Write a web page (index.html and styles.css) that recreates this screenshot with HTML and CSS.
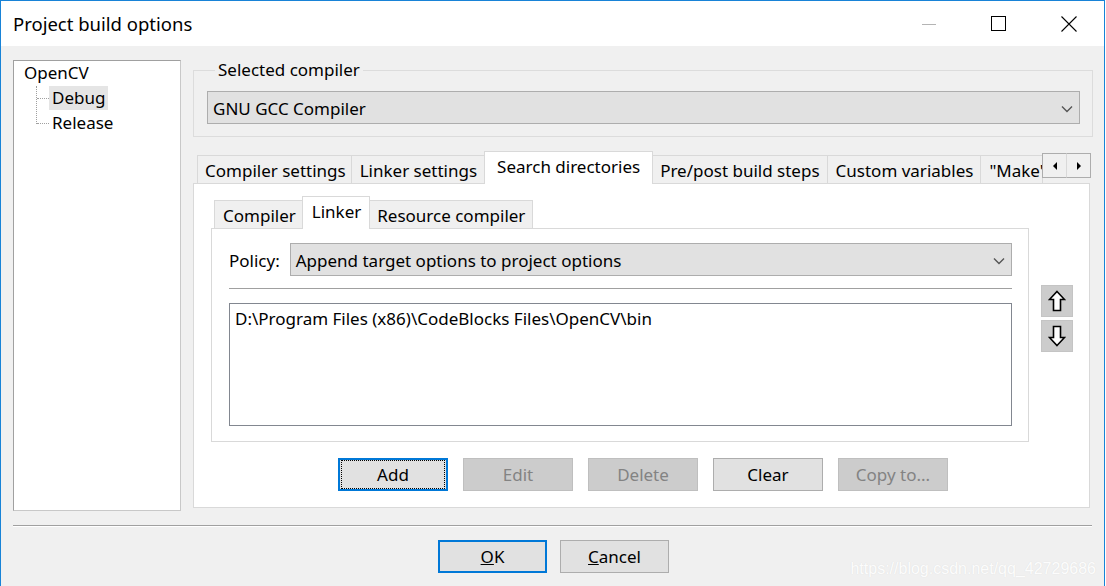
FILE: index.html
```html
<!DOCTYPE html>
<html lang="en">

<head>
	<meta charset="utf-8">
	<title>Project build options</title>
	<link rel="stylesheet" href="styles.css">
</head>

<body>
	<div class="window">
		<div class="titlebar">
			<div class="title">Project build options</div>
			<div class="caption-btns">
				<span class="cap"><svg width="14" height="14" viewBox="0 0 14 14"><path d="M0 7.5h14" stroke="#b4b4b4" stroke-width="1"/></svg></span>
				<span class="cap"><svg width="16" height="16" viewBox="0 0 16 16"><rect x="0.5" y="0.5" width="14" height="14" fill="none" stroke="#000"/></svg></span>
				<span class="cap"><svg width="16" height="16" viewBox="0 0 16 16"><path d="M0.5 0.5L15.5 15.5M15.5 0.5L0.5 15.5" stroke="#000" stroke-width="1.1"/></svg></span>
			</div>
		</div>

		<div class="content">
			<div class="tree">
				<div class="node root">OpenCV</div>
				<div class="branch">
					<div class="node child"><span class="sel">Debug</span></div>
					<div class="node child last"><span>Release</span></div>
				</div>
			</div>

			<div class="main">
				<fieldset class="group">
					<legend>Selected compiler</legend>
					<div class="combo wide">
						<span>GNU GCC Compiler</span>
						<svg class="chev" width="12" height="8" viewBox="0 0 12 8"><path d="M1 1.5l5 5 5-5" fill="none" stroke="#555" stroke-width="1.4"/></svg>
					</div>
				</fieldset>

				<div class="tabs top">
					<div class="tab">Compiler settings</div>
					<div class="tab">Linker settings</div>
					<div class="tab active">Search directories</div>
					<div class="tab">Pre/post build steps</div>
					<div class="tab">Custom variables</div>
					<div class="tab clip"><span>"Make" commands</span></div>
					<div class="scroller">
						<span><svg width="6" height="8" viewBox="0 0 6 8"><path d="M5 0v8L1 4z" fill="#000"/></svg></span>
						<span><svg width="6" height="8" viewBox="0 0 6 8"><path d="M1 0v8l4-4z" fill="#000"/></svg></span>
					</div>
				</div>

				<div class="panel">
					<div class="tabs inner">
						<div class="tab">Compiler</div>
						<div class="tab active">Linker</div>
						<div class="tab">Resource compiler</div>
					</div>

					<div class="inner-row">
						<div class="subpanel">
							<div class="policy">
								<label>Policy:</label>
								<div class="combo">
									<span>Append target options to project options</span>
									<svg class="chev" width="12" height="8" viewBox="0 0 12 8"><path d="M1 1.5l5 5 5-5" fill="none" stroke="#555" stroke-width="1.4"/></svg>
								</div>
							</div>
							<div class="rule"></div>
							<div class="listbox">D:\Program Files (x86)\CodeBlocks Files\OpenCV\bin</div>
						</div>

						<div class="movers">
							<span class="mover"><svg width="18" height="22" viewBox="0 0 18 22"><path d="M9 1.5L16.5 9.5H12.5V20.5H5.5V9.5H1.5Z" fill="#fff" stroke="#000" stroke-width="1.6"/></svg></span>
							<span class="mover"><svg width="18" height="22" viewBox="0 0 18 22"><path d="M9 20.5L16.5 12.5H12.5V1.5H5.5V12.5H1.5Z" fill="#fff" stroke="#000" stroke-width="1.6"/></svg></span>
						</div>
					</div>

					<div class="actions">
						<button class="btn focus"><span>Add</span></button>
						<button class="btn off">Edit</button>
						<button class="btn off">Delete</button>
						<button class="btn">Clear</button>
						<button class="btn off">Copy to...</button>
					</div>
				</div>
			</div>
		</div>

		<div class="footer-rule"></div>

		<div class="footer">
			<button class="btn default"><u>O</u>K</button>
			<button class="btn"><u>C</u>ancel</button>
		</div>

		<div class="watermark">https://blog.csdn.net/qq_42729686</div>
	</div>
</body>

</html>
```

FILE: styles.css
```css
* {
	box-sizing: border-box;
}

body {
	margin: 0;
	width: 1106px;
	height: 586px;
	overflow: hidden;
	background: #fff;
	font-family: 'Noto Sans', sans-serif;
	font-size: 17px;
	color: #000;
}

.window {
	position: relative;
	width: 1105px;
	height: 586px;
	border: 1px solid #1883d7;
	border-bottom: none;
	background: #f0f0f0;
	display: flex;
	flex-direction: column;
}

/* title bar */
.titlebar {
	height: 45px;
	background: #fff;
	display: flex;
	align-items: center;
	justify-content: space-between;
	flex: none;
}
.title {
	padding-left: 12px;
	font-size: 18.5px;
	margin-top: -1px;
}
.caption-btns {
	display: flex;
	height: 100%;
}
.cap {
	width: 70px;
	display: flex;
	align-items: center;
	justify-content: center;
}

/* body */
.content {
	display: flex;
	gap: 12px;
	padding: 14px 11px 0 12px;
	flex: none;
}

.tree {
	width: 169px;
	height: 451px;
	background: #fff;
	border: 1px solid #a0a0a0;
	border-right-color: #c8c8c8;
	border-bottom-color: #c8c8c8;
	padding: 0 0 0 10px;
	line-height: 24.5px;
}
.branch {
	margin-left: 12px;
	border-left: 1px dotted #a0a0a0;
	height: 38px;
	width: 100px;
}
.node.child {
	position: relative;
	padding-left: 15px;
	height: 25px;
}
.node.child::before {
	content: '';
	position: absolute;
	left: 0;
	top: 12px;
	width: 12px;
	border-top: 1px dotted #a0a0a0;
}
.node.child .sel {
	background: #e5e5e5;
	padding: 0 3px;
	margin-left: -3px;
	display: inline-block;
}

.main {
	flex: 1;
	display: flex;
	flex-direction: column;
}

.group {
	margin: 0;
	padding: 0 12px 0 13px;
	border: 1px solid #dcdcdc;
	height: 77px;
	width: 900px;
}
.group legend {
	padding: 0 3px;
	margin-left: 8px;
	line-height: 20px;
}

.combo {
	height: 33px;
	background: #e1e1e1;
	border: 1px solid #adadad;
	display: flex;
	align-items: center;
	justify-content: space-between;
	padding: 0 6px 0 5px;
	flex: 1;
}
.group .combo {
	margin-top: 11px;
}
.chev {
	margin-top: 2px;
}

/* tabs */
.tabs {
	display: flex;
	align-items: flex-end;
}
.tabs.top {
	margin-top: 13px;
	padding-left: 4px;
	height: 33px;
	width: 898px;
	position: relative;
	z-index: 1;
}
.tab {
	height: 28px;
	padding: 2px 7px 0 8px;
	background: #f0f0f0;
	border: 1px solid #d9d9d9;
	border-bottom: none;
	margin-right: -1px;
	display: flex;
	align-items: center;
	white-space: nowrap;
	line-height: 1;
}
.tabs.top .tab:first-child {
	padding: 2px 5px 0 7px;
}
.tabs.top .tab:nth-child(2) {
	padding: 2px 8px 0 8px;
}
.tab.active {
	background: #fff;
	height: 33px;
	margin-bottom: -1px;
	margin-left: -1px;
	margin-right: -2px;
	padding: 0 12px 4px 12px;
	position: relative;
	z-index: 2;
}
.tab.clip {
	flex: 1;
	min-width: 0;
	overflow: hidden;
	padding-right: 0;
}
.tab.clip span {
	display: block;
	overflow: hidden;
	width: 100%;
}
.scroller {
	display: flex;
	margin-bottom: 5px;
	height: 25px;
	flex: none;
}
.scroller span {
	width: 25px;
	height: 25px;
	background: #f0f0f0;
	border: 1px solid #adadad;
	display: flex;
	align-items: center;
	justify-content: center;
}
.scroller span + span {
	margin-left: -1px;
	border-left-color: #d9d9d9;
}

.panel {
	width: 897px;
	height: 325px;
	background: #fff;
	border: 1px solid #d9d9d9;
	padding: 12px 0 0 17px;
	display: flex;
	flex-direction: column;
}

.tabs.inner {
	height: 32px;
	padding-left: 3px;
	position: relative;
	z-index: 1;
}
.tabs.inner .tab {
	height: 28px;
}
.tabs.inner .tab.active {
	height: 33px;
	padding: 0 8px 4px 9px;
}

.inner-row {
	display: flex;
	gap: 12px;
}
.subpanel {
	width: 818px;
	height: 214px;
	border: 1px solid #d9d9d9;
	padding: 14px 16px 0 17px;
}
.policy {
	display: flex;
	align-items: center;
	gap: 10px;
}
.combo span,
.policy label {
	padding-top: 1px;
}
.rule {
	height: 2px;
	border-top: 1px solid #a0a0a0;
	border-bottom: 1px solid #fff;
	margin-top: 12px;
}
.listbox {
	margin-top: 13px;
	height: 123px;
	border: 1px solid #828790;
	padding: 2px 5px 0;
	line-height: 26px;
}

.movers {
	display: flex;
	flex-direction: column;
	gap: 3px;
	padding-top: 57px;
}
.mover {
	width: 32px;
	height: 32px;
	background: #cccccc;
	border: 1px solid #c4c4c4;
	display: flex;
	align-items: center;
	justify-content: center;
}

/* buttons */
.actions {
	display: flex;
	gap: 15px;
	padding-left: 127px;
	margin-top: 16px;
}
.btn {
	width: 110px;
	height: 33px;
	font: inherit;
	color: #000;
	background: #e1e1e1;
	border: 1px solid #adadad;
	padding: 0;
	display: flex;
	align-items: center;
	justify-content: center;
}
.btn.off {
	background: #cccccc;
	border-color: #bfbfbf;
	color: #838383;
}
.btn.focus,
.btn.default {
	border: 2px solid #0078d7;
}
.btn.focus span {
	display: flex;
	align-items: center;
	justify-content: center;
	width: 100%;
	height: 100%;
	border: 1px dotted #000;
	margin: 1px;
}

.footer-rule {
	margin: 14px 12px 0 12px;
	height: 2px;
	border-top: 1px solid #a0a0a0;
	border-bottom: 1px solid #fff;
}
.footer {
	display: flex;
	gap: 13px;
	padding: 13px 0 0 437px;
}
.footer .btn {
	width: 109px;
}

.watermark {
	position: absolute;
	right: 8px;
	bottom: 8px;
	font-family: 'Liberation Sans', sans-serif;
	font-size: 16px;
	color: #fff;
	opacity: 0.85;
	text-shadow: 0 0 1px #d8d8d8;
}
```
